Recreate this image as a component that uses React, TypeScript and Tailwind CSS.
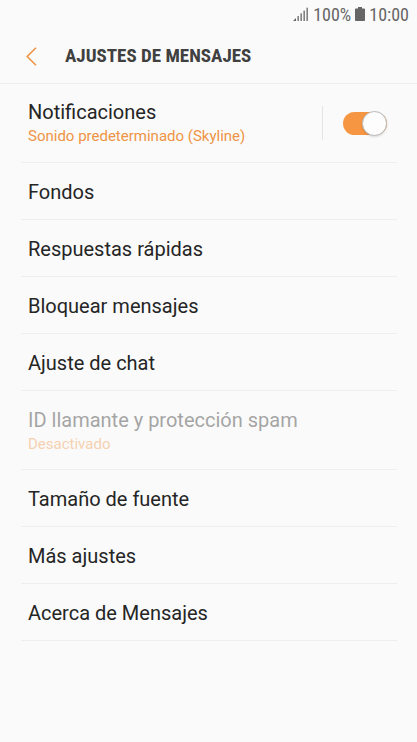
import { useState } from "react";

type SettingItem = {
  title: string;
  detail?: string;
  disabled?: boolean;
};

const items: SettingItem[] = [
  { title: "Fondos" },
  { title: "Respuestas rápidas" },
  { title: "Bloquear mensajes" },
  { title: "Ajuste de chat" },
  { title: "ID llamante y protección spam", detail: "Desactivado", disabled: true },
  { title: "Tamaño de fuente" },
  { title: "Más ajustes" },
  { title: "Acerca de Mensajes" },
];

function StatusBar() {
  return (
    <div className="flex h-7 items-center justify-end gap-1 pr-2 font-['Roboto_Condensed',Roboto,sans-serif] text-[18px] text-[#666666]">
      <svg className="h-4 w-4" viewBox="0 0 16 16" fill="currentColor" aria-hidden="true">
        <path d="M0 15l3-3v3z" />
        <rect x="4.500" y="10" width="1.300" height="5" />
        <rect x="7.500" y="7.300" width="1.300" height="7.700" />
        <rect x="10.500" y="4.600" width="1.300" height="10.400" />
        <rect x="13.500" y="1.700" width="1.300" height="13.300" />
      </svg>
      <span>100%</span>
      <svg className="h-4 w-[10px]" viewBox="0 0 10 16" fill="currentColor" aria-hidden="true">
        <path d="M3 1h4v1.500h2.300q.7 0 .7.700V14.300q0 .7-.7.700H.7q-.7 0-.7-.7V3.200q0-.7.700-.7H3z" />
      </svg>
      <span>10:00</span>
    </div>
  );
}

function Header() {
  return (
    <header className="flex h-14 items-center gap-7 border-b border-[#eeeeee] pt-0.5 pl-[26px]">
      <button type="button" aria-label="Atrás" className="cursor-pointer text-[#ef9445]">
        <svg className="h-5 w-[11px]" viewBox="0 0 11 20" fill="none" stroke="currentColor" strokeWidth="1.600">
          <path d="M10 0.700L1.200 9.500L10 18.300" />
        </svg>
      </button>
      <h1 className="font-['Roboto_Condensed',Roboto,sans-serif] text-[19px] font-bold text-[#404040]">
        AJUSTES DE MENSAJES
      </h1>
    </header>
  );
}

function ItemText({ title, detail, disabled }: SettingItem) {
  return (
    <span className={`flex flex-col ${disabled ? "opacity-40" : ""}`}>
      <span className="text-[20px] leading-[26px] text-[#252525]">{title}</span>
      {detail ? <span className="text-[15px] leading-[22px] text-[#ef9445]">{detail}</span> : null}
    </span>
  );
}

function NotificationsRow() {
  const [enabled, setEnabled] = useState(true);

  return (
    <li className="flex h-[79px] items-center border-b border-[#eeeeee] pr-[10px] pl-[7px]">
      <button type="button" className="flex-1 cursor-pointer text-left">
        <ItemText title="Notificaciones" detail="Sonido predeterminado (Skyline)" />
      </button>
      <label className="flex h-[34px] cursor-pointer items-center border-l border-[#e4e4e4] pl-5">
        <input
          type="checkbox"
          role="switch"
          aria-label="Notificaciones"
          className="peer sr-only"
          checked={enabled}
          onChange={(e) => setEnabled(e.target.checked)}
        />
        <span className="flex h-[23px] w-11 items-center rounded-full bg-[#c4c4c4] peer-checked:justify-end peer-checked:bg-[#f79642]">
          <span className="h-[25px] w-[25px] shrink-0 rounded-full border border-[#bcbcbc] bg-[#fdfdfd] shadow-sm" />
        </span>
      </label>
    </li>
  );
}

export default function App() {
  return (
    <div className="min-h-screen bg-[#fafafa] font-[Roboto,sans-serif]">
      <StatusBar />
      <Header />
      <main>
        <ul className="mr-5 ml-[21px] pb-8">
          <NotificationsRow />
          {items.map((item) => (
            <li key={item.title} className="border-b border-[#eeeeee]">
              <button
                type="button"
                disabled={item.disabled}
                className={`flex w-full items-center pt-0.5 pl-[7px] text-left ${
                  item.detail ? "h-[78px]" : "h-14"
                } ${item.disabled ? "" : "cursor-pointer"}`}
              >
                <ItemText {...item} />
              </button>
            </li>
          ))}
        </ul>
      </main>
    </div>
  );
}
